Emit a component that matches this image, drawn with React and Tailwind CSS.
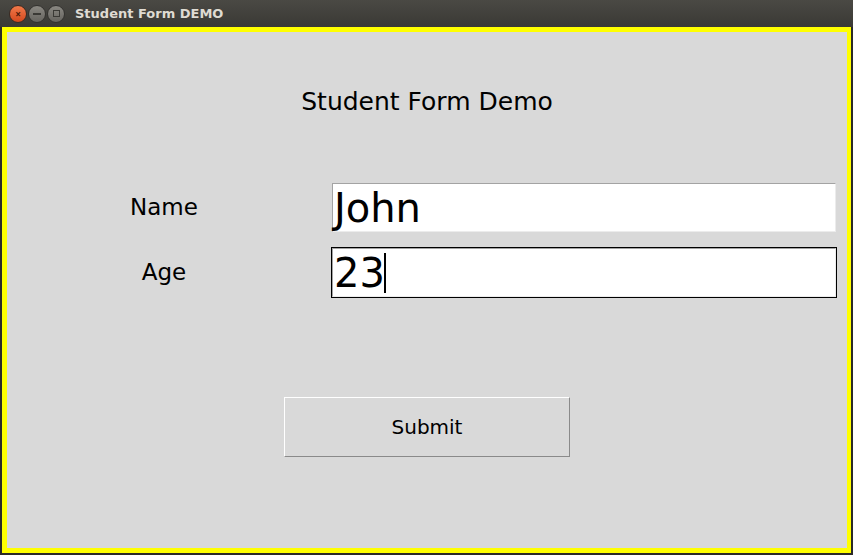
import React from 'react';

const FONT = { fontFamily: '"DejaVu Sans", "Liberation Sans", sans-serif' };

function TitleBar() {
  return (
    <div className="h-[27px] flex items-center bg-gradient-to-b from-[#4a4944] to-[#3a3935] shrink-0">
      {/* window buttons */}
      <div className="flex items-center gap-[1px] pl-[9px]">
        <div className="w-[18px] h-[18px] rounded-full bg-gradient-to-b from-[#f0794a] to-[#d4471b] border border-[#3b2a22] flex items-center justify-center">
          <span className="text-[10px] leading-none font-bold text-[#4a1a08]">×</span>
        </div>
        <div className="w-[18px] h-[18px] rounded-full bg-gradient-to-b from-[#8a8882] to-[#66645f] border border-[#33322f] flex items-center justify-center">
          <div className="w-[8px] h-[2px] bg-[#3a3935]" />
        </div>
        <div className="w-[18px] h-[18px] rounded-full bg-gradient-to-b from-[#8a8882] to-[#66645f] border border-[#33322f] flex items-center justify-center">
          <div className="w-[7px] h-[7px] border border-[#3a3935]" />
        </div>
      </div>
      <span className="ml-[10px] text-[13px] font-bold text-[#dfdbd2]" style={FONT}>
        Student Form DEMO
      </span>
    </div>
  );
}

function Entry({ value, focused }) {
  return (
    <div className={`h-[51px] border ${focused ? 'border-black' : 'border-[#d9d9d9]'}`}>
      <div className="h-full bg-white border border-t-[#a3a3a3] border-l-[#a3a3a3] border-b-[#ececec] border-r-[#ececec] flex items-center pl-[1px]">
        <span className="text-[40px] leading-none text-black" style={FONT}>{value}</span>
        {focused && <span className="w-[2px] h-[40px] bg-black -ml-[1px]" />}
      </div>
    </div>
  );
}

export default function App() {
  return (
    <div className="w-[853px] h-[555px] flex flex-col bg-[#2b2a27] overflow-hidden">
      <TitleBar />
      <div className="flex-1 px-[2px] pb-[2px] flex">
        <div className="flex-1 border-[5px] border-r-4 border-[#ffff00] bg-[#d9d9d9] flex flex-col text-black" style={FONT}>
          <div className="pt-[56px] h-[84px] text-center text-[25px] leading-[28px]">Student Form Demo</div>

          <div className="mt-[66px] grid grid-cols-[314px_506px] gap-x-[10px] gap-y-[14px] items-center">
            <div className="text-center text-[23px]">Name</div>
            <Entry value="John" />
            <div className="text-center text-[23px]">Age</div>
            <Entry value="23" focused />
          </div>

          <div className="mt-[99px] flex justify-center">
            <div className="w-[286px] h-[60px] border border-t-white border-l-white border-b-[#8a8a8a] border-r-[#8a8a8a] flex items-center justify-center text-[20px]">
              Submit
            </div>
          </div>
        </div>
      </div>
    </div>
  );
}
